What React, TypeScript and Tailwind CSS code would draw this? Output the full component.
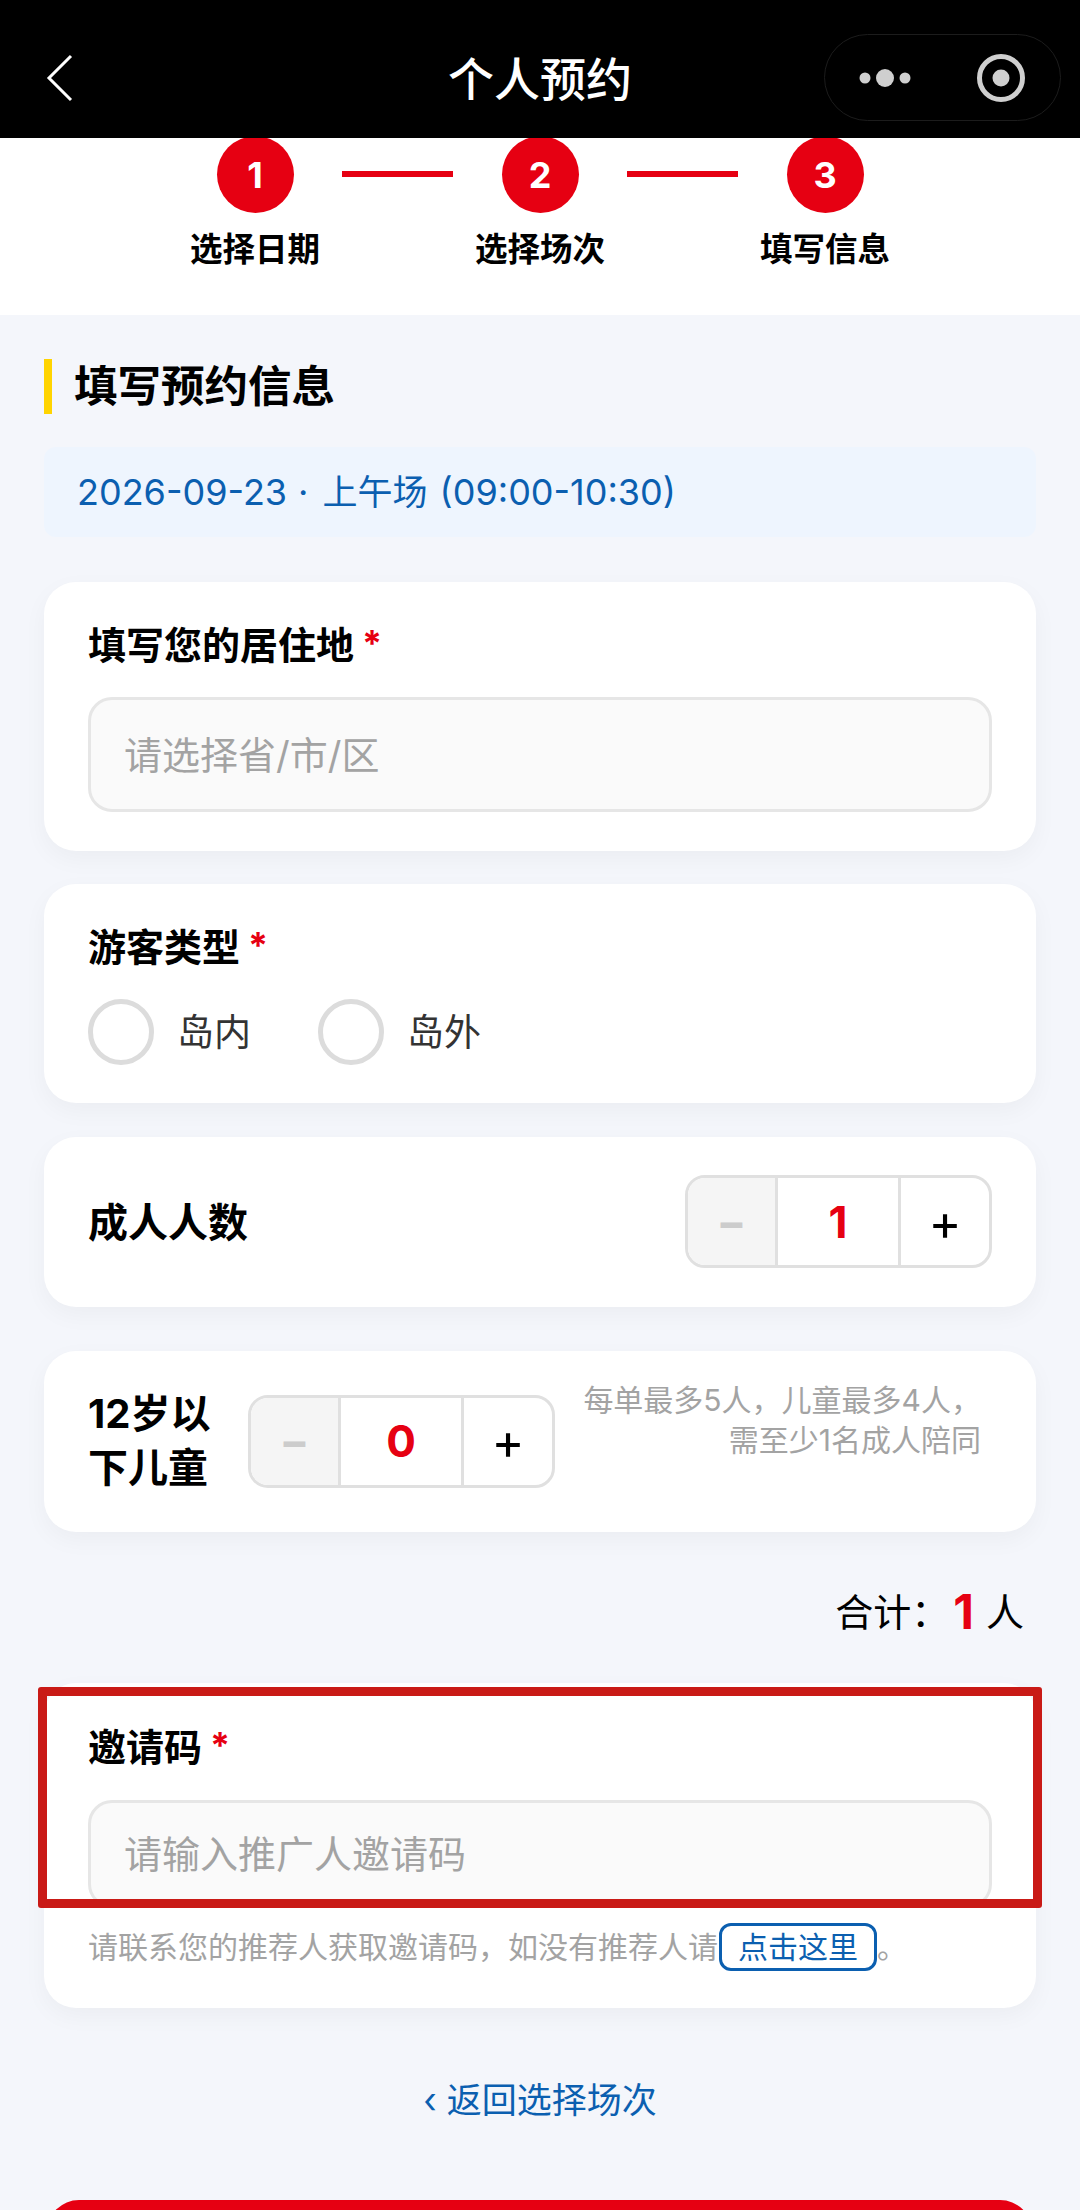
const steps = [
  { num: '1', label: '选择日期' },
  { num: '2', label: '选择场次' },
  { num: '3', label: '填写信息' },
]

function Required() {
  return <span className="relative -top-[3px] ml-[8px] text-[36px] font-bold leading-none text-[#e60012]">*</span>
}

function Stepper({ value }: { value: string }) {
  return (
    <div className="flex h-[93px] w-[307px] shrink-0 overflow-hidden rounded-[20px] border-[3px] border-[#e0e0e0] bg-white">
      <div className="flex w-[87px] items-center justify-center bg-[#f5f5f5] text-[44px] font-bold leading-none text-[#cccccc]">−</div>
      <div className="flex flex-1 items-center justify-center border-x-[3px] border-[#e0e0e0] text-[44px] font-bold leading-none text-[#e60012]">{value}</div>
      <div className="flex w-[88px] items-center justify-center text-[50px] leading-none text-black">+</div>
    </div>
  )
}

function TextBox({ placeholder, height }: { placeholder: string; height: string }) {
  return (
    <div className={`flex ${height} items-center rounded-[24px] border-[3px] border-[#e6e6e6] bg-[#fafafa] pl-[33px] text-[38px] leading-none text-[#a3a3a3]`}>
      {placeholder}
    </div>
  )
}

export default function App() {
  return (
    <div lang="zh-CN" className="h-[2210px] w-[1080px] overflow-hidden bg-[#f4f6fb] font-['Inter','Noto_Sans_CJK_SC',sans-serif]">
      {/* Nav bar */}
      <header className="relative z-10 flex h-[138px] items-center justify-between bg-black pl-[44px] pr-[19px] pt-[17px]">
        <svg width="32" height="48" viewBox="0 0 32 48" fill="none">
          <path d="M27 2 L5 24 L27 46" stroke="#fff" strokeWidth="3" />
        </svg>
        <h1 className="absolute inset-x-0 top-[50px] text-center text-[46px] font-medium leading-[58px] text-white">个人预约</h1>
        <div className="flex h-[87px] w-[237px] items-center rounded-full border border-[#1c1c1c]">
          <svg width="118" height="60" viewBox="0 0 118 60" className="shrink-0">
            <circle cx="40" cy="30" r="5.5" fill="#cfcfcf" />
            <circle cx="60" cy="30" r="9" fill="#cfcfcf" />
            <circle cx="80" cy="30" r="5.5" fill="#cfcfcf" />
          </svg>
          <div className="h-[55px] w-px bg-[#222222]" />
          <svg width="117" height="60" viewBox="0 0 117 60" className="shrink-0">
            <circle cx="58" cy="30" r="21.5" fill="none" stroke="#cfcfcf" strokeWidth="5" />
            <circle cx="58" cy="30" r="8.5" fill="#cfcfcf" />
          </svg>
        </div>
      </header>

      {/* Steps */}
      <section className="flex h-[177px] justify-center gap-[22px] bg-white">
        {steps.map((step, i) => (
          <div key={step.num} className="flex gap-[22px]">
            {i > 0 && <div className="mt-[33px] h-[6px] w-[111px] bg-[#e60012]" />}
            <div className="flex w-[130px] flex-col items-center">
              <div className="-mt-[2px] flex h-[77px] w-[77px] shrink-0 items-center justify-center rounded-full bg-[#e60012] text-[36px] font-bold text-white">
                {step.num}
              </div>
              <div className="mt-[17px] whitespace-nowrap text-[32.5px] font-bold leading-[40px] text-black">{step.label}</div>
            </div>
          </div>
        ))}
      </section>

      <main className="px-[44px]">
        <h2 className="mt-[44px] flex h-[55px] items-center border-l-[8px] border-[#ffd400] pl-[22px] text-[43.5px] font-bold text-black">填写预约信息</h2>

        <div className="mt-[33px] flex h-[90px] items-center whitespace-pre rounded-[12px] bg-[#eef5fe] pl-[33px] text-[36px] text-[#0b5fb0]">
          2026-09-23<span className="ml-[11px] mr-[14px]">·</span><span className="mr-[2px] text-[35px]">上午场</span> (09:00-10:30)
        </div>

        <div className="mt-[45px] rounded-[32px] bg-white px-[44px] pb-[39px] pt-[38px] shadow-[0_8px_24px_rgba(0,0,0,0.04)]">
          <div className="h-[50px] text-[38px] font-bold leading-[50px] text-black">填写您的居住地<Required /></div>
          <div className="mt-[27px]"><TextBox placeholder="请选择省/市/区" height="h-[115px]" /></div>
        </div>

        <div className="mt-[33px] rounded-[32px] bg-white px-[44px] pb-[38px] pt-[38px] shadow-[0_8px_24px_rgba(0,0,0,0.04)]">
          <div className="h-[50px] text-[38px] font-bold leading-[50px] text-black">游客类型<Required /></div>
          <div className="mt-[27px] flex h-[66px] gap-[67px]">
            {['岛内', '岛外'].map((name) => (
              <div key={name} className="flex items-center gap-[23px]">
                <div className="h-[66px] w-[66px] rounded-full border-[5px] border-[#dcdcdc]" />
                <span className="text-[37px] leading-none text-[#333333]">{name}</span>
              </div>
            ))}
          </div>
        </div>

        <div className="mt-[34px] flex items-center justify-between rounded-[32px] bg-white px-[44px] pb-[39px] pt-[38px] shadow-[0_8px_24px_rgba(0,0,0,0.04)]">
          <div className="pt-[2px] text-[40px] font-bold leading-none text-black">成人人数</div>
          <Stepper value="1" />
        </div>

        <div className="mt-[44px] flex items-center rounded-[32px] bg-white pb-[37px] pl-[44px] pr-[55px] pt-[36px] shadow-[0_8px_24px_rgba(0,0,0,0.04)]">
          <div className="w-[160px] shrink-0 text-[40px] font-bold leading-[54px] text-black">12岁以<br />下儿童</div>
          <Stepper value="0" />
          <div className="-mt-[42px] flex-1 whitespace-nowrap text-right text-[30px] leading-[40px] text-[#a3a3a3]">
            每单最多5人，儿童最多4人，<br />需至少1名成人陪同
          </div>
        </div>

        <div className="mt-[50px] flex h-[60px] items-center justify-end pr-[12px] text-[38px] leading-none text-black">
          合计：<span className="ml-[4px] mr-[12px] text-[48px] font-bold leading-none text-[#e60012]">1</span>人
        </div>

        <div className="relative mt-[41px] rounded-[32px] bg-white px-[44px] pb-[37px] pt-[39px] shadow-[0_8px_24px_rgba(0,0,0,0.04)]">
          <div className="h-[50px] text-[38px] font-bold leading-[50px] text-black">邀请码<Required /></div>
          <div className="mt-[28px]"><TextBox placeholder="请输入推广人邀请码" height="h-[108px]" /></div>
          <div className="mt-[15px] flex h-[48px] items-center whitespace-nowrap text-[30px] text-[#a3a3a3]">
            请联系您的推荐人获取邀请码，如没有推荐人请
            <span className="ml-px flex h-[48px] items-center rounded-[12px] border-[3px] border-[#0b5fb0] px-[16px] text-[#0b5fb0]">点击这里</span>
            。
          </div>
          {/* Annotation frame on top of the card */}
          <div className="absolute -inset-x-[6px] top-[4px] h-[221px] rounded-[3px] border-[9px] border-[#c91a16]" />
        </div>

        <div className="mt-[67px] h-[50px] text-center text-[35px] leading-[50px] text-[#0b5fb0]">‹ 返回选择场次</div>

        <div className="ml-[3px] mr-[4px] mt-[75px] h-[100px] rounded-[32px] bg-[#e60012]" />
      </main>
    </div>
  )
}
